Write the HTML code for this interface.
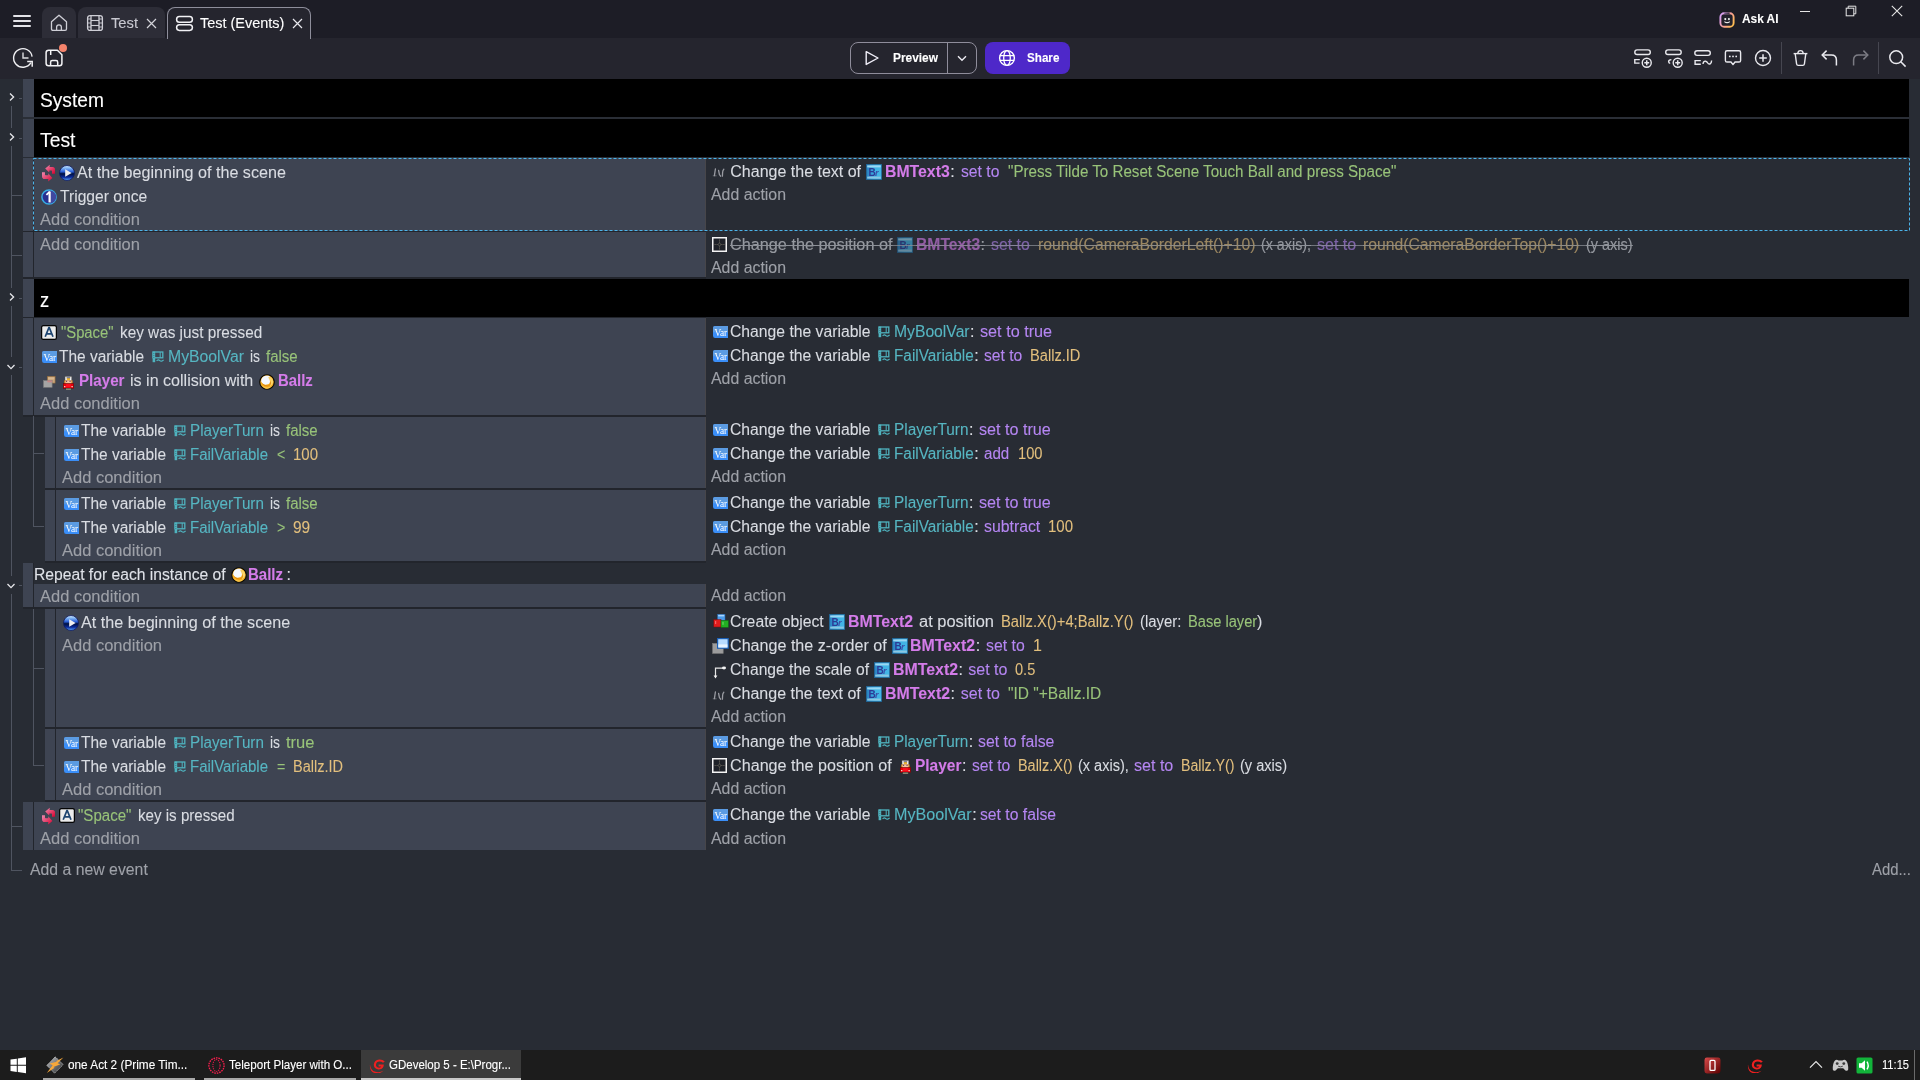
<!DOCTYPE html><html><head><meta charset="utf-8"><style>
*{margin:0;padding:0;box-sizing:border-box}
html,body{width:1920px;height:1080px;overflow:hidden;background:#282c34}
#r{position:relative;width:1920px;height:1080px;overflow:hidden;font-family:"Liberation Sans",sans-serif;will-change:transform}
#r>*{position:absolute}
#r>span{white-space:pre;font-size:16px;line-height:20px;transform-origin:0 0;-webkit-text-stroke:0.1px currentColor}
.t{color:#d9dce2}
.ad{color:#9ea1a8}
.ob{color:#d47ce9;font-weight:bold}
.op{color:#b586f2}
.st{color:#98c379}
.nu{color:#e2bf7d}
.va{color:#56b6c2}
.wh{color:#dfe2e8}
.gh{color:#ffffff;font-size:21px!important;line-height:20px!important}
.tab{font-size:14px!important;line-height:20px!important;color:#c9c9d1}
.tabA{font-size:14px!important;line-height:20px!important;color:#ffffff}
.btn{font-size:12px!important;line-height:20px!important;color:#ffffff;font-weight:bold}
.tb{font-size:12px!important;line-height:20px!important;color:#ffffff}
.strike{text-decoration:line-through}
.dim{opacity:.62}
</style></head><body><div id="r"><div style="left:0px;top:0px;width:1920px;height:38px;background:#1d1d26;"></div>
<div style="left:0px;top:38px;width:1920px;height:41px;background:#25252e;"></div>
<div style="left:13px;top:15px;width:18px;height:2px;background:#e3e3e8;border-radius:1px"></div>
<div style="left:13px;top:20px;width:18px;height:2px;background:#e3e3e8;border-radius:1px"></div>
<div style="left:13px;top:25px;width:18px;height:2px;background:#e3e3e8;border-radius:1px"></div>
<div style="left:42px;top:7px;width:34px;height:31px;background:#2d2d37;border-radius:8px 8px 0 0"></div>
<svg style="left:50px;top:14px;" width="18" height="18" viewBox="0 0 18 18"><path d="M1.5 7.8 L9 1.2 L16.5 7.8 V15 Q16.5 16.4 15.1 16.4 H2.9 Q1.5 16.4 1.5 15 Z" fill="none" stroke="#cfcfd6" stroke-width="1.3" stroke-linejoin="round"/><path d="M6.6 16.4 V13.2 Q6.6 10.8 9 10.8 Q11.4 10.8 11.4 13.2 V16.4" fill="none" stroke="#cfcfd6" stroke-width="1.3"/></svg>
<div style="left:78px;top:7px;width:87px;height:31px;background:#2d2d37;border-radius:8px 8px 0 0"></div>
<svg style="left:86px;top:14px;" width="18" height="18" viewBox="0 0 18 18"><rect x="1.6" y="1.6" width="14.8" height="14.8" rx="2.5" fill="none" stroke="#cfcfd6" stroke-width="1.3"/><line x1="5" y1="1.6" x2="5" y2="16.4" stroke="#cfcfd6" stroke-width="1.3"/><line x1="13" y1="1.6" x2="13" y2="16.4" stroke="#cfcfd6" stroke-width="1.3"/><line x1="5" y1="6.5" x2="13" y2="6.5" stroke="#cfcfd6" stroke-width="1.1"/><line x1="5" y1="11.5" x2="13" y2="11.5" stroke="#cfcfd6" stroke-width="1.1"/><path d="M1.6 5H5M1.6 9H5M1.6 13H5M13 5H16.4M13 9H16.4M13 13H16.4" stroke="#cfcfd6" stroke-width="0.9"/></svg>
<span class="tab" style="left:111.00px;top:13.00px;transform:scaleX(1.0511);">Test</span>
<svg style="left:146px;top:18px;" width="11" height="11" viewBox="0 0 11 11"><path d="M1 1L10 10M10 1L1 10" stroke="#d4d4da" stroke-width="1.2"/></svg>
<div style="left:167px;top:7px;width:144px;height:32px;background:#25252e;border:1px solid #8e8e9b;border-bottom:none;border-radius:8px 8px 0 0"></div>
<svg style="left:175px;top:15px;" width="19" height="17" viewBox="0 0 19 17"><rect x="1.6" y="1.6" width="15.8" height="5.6" rx="2.8" fill="none" stroke="#f2f2f5" stroke-width="1.5"/><rect x="1.6" y="9.8" width="15.8" height="5.6" rx="2.8" fill="none" stroke="#f2f2f5" stroke-width="1.5"/></svg>
<span class="tabA" style="left:200.40px;top:13.00px;transform:scaleX(1.0330);">Test (Events)</span>
<svg style="left:292px;top:18px;" width="11" height="11" viewBox="0 0 11 11"><path d="M1 1L10 10M10 1L1 10" stroke="#e8e8ee" stroke-width="1.2"/></svg>
<svg style="left:1717.5px;top:10.5px;" width="18" height="18" viewBox="0 0 18 18"><defs><linearGradient id="ai" x1="0" y1="0.2" x2="1" y2="0.8"><stop offset="0" stop-color="#d8a0f4"/><stop offset=".55" stop-color="#f8a090"/><stop offset="1" stop-color="#ffbe50"/></linearGradient><linearGradient id="ai2" gradientUnits="userSpaceOnUse" x1="5" y1="0" x2="12.5" y2="0"><stop offset="0" stop-color="#8a6aa0"/><stop offset="1" stop-color="#2a2434"/></linearGradient></defs><rect x="2.4" y="2.3" width="13.2" height="13.4" rx="3.8" fill="#1f1f29" stroke="url(#ai)" stroke-width="1.9"/><path d="M6.2 2.3 H11.6" stroke="url(#ai2)" stroke-width="1.9"/><rect x="5.4" y="5.6" width="7.2" height="7.2" rx="1.2" fill="#24242e"/><circle cx="7.3" cy="8.1" r="1.05" fill="#f0f0f0"/><circle cx="10.9" cy="8.1" r="1.05" fill="#f0f0f0"/><path d="M6.4 10.6 Q9.1 12.8 11.8 10.6" fill="none" stroke="#e8e8e8" stroke-width="1.2"/></svg>
<span class="btn" style="left:1742.00px;top:9.00px;transform:scaleX(0.9483);font-size:12.5px!important">Ask AI</span>
<div style="left:1800px;top:11px;width:10px;height:1px;background:#e6e6e6;"></div>
<svg style="left:1845px;top:5px;" width="12" height="12" viewBox="0 0 12 12"><rect x="1.2" y="3.2" width="7.6" height="7.6" fill="none" stroke="#e6e6e6" stroke-width="1"/><path d="M3.2 3.2V1.2H10.8V8.8H8.8" fill="none" stroke="#e6e6e6" stroke-width="1"/></svg>
<svg style="left:1891px;top:5px;" width="12" height="12" viewBox="0 0 12 12"><path d="M0.8 0.8L11.2 11.2M11.2 0.8L0.8 11.2" stroke="#e6e6e6" stroke-width="1.1"/></svg>
<svg style="left:10px;top:45px;" width="26" height="26" viewBox="0 0 26 26"><path d="M22.1 11.6 A9.3 9.3 0 1 0 20.9 17.7" fill="none" stroke="#f0f0f3" stroke-width="1.4"/><path d="M17.2 16.5 H22.2 V21.8" fill="none" stroke="#f0f0f3" stroke-width="1.5"/><path d="M13 7.5 V13 H18.5" fill="none" stroke="#dcdce0" stroke-width="1.4"/></svg>
<svg style="left:42.8px;top:42.2px;" width="26" height="26" viewBox="0 0 26 26"><path d="M5.7 8.2 H14.4 L18.9 12.7 V21.3 Q18.9 23.8 16.4 23.8 H5.6 Q3.1 23.8 3.1 21.3 V10.7 Q3.1 8.2 5.7 8.2 Z" fill="none" stroke="#f4f4f6" stroke-width="1.5" stroke-linejoin="round"/><path d="M7.7 8.2 V13" fill="none" stroke="#f4f4f6" stroke-width="1.5"/><path d="M7.6 23.8 V20.2 Q7.6 18.6 9.2 18.6 H13.1 Q14.7 18.6 14.7 20.2 V23.8" fill="none" stroke="#f4f4f6" stroke-width="1.5"/></svg>
<div style="left:59px;top:44px;width:8px;height:8px;border-radius:50%;background:#f4836b"></div>
<div style="left:850px;top:42px;width:127px;height:32px;border:1px solid #8f8d9b;border-radius:8px"></div>
<div style="left:947px;top:43px;width:1px;height:30px;background:#8f8d9b;"></div>
<svg style="left:864px;top:50px;" width="16" height="16" viewBox="0 0 16 16"><path d="M2.2 1.6 L14 8 L2.2 14.4 Z" fill="none" stroke="#f0eef8" stroke-width="1.4" stroke-linejoin="round"/></svg>
<span class="btn" style="left:892.50px;top:47.50px;transform:scaleX(0.9917);">Preview</span>
<svg style="left:957px;top:55px;" width="10" height="7" viewBox="0 0 10 7"><path d="M1 1.2 L5 5.2 L9 1.2" fill="none" stroke="#ecebf2" stroke-width="1.4"/></svg>
<div style="left:985px;top:42px;width:85px;height:32px;background:#4e28c9;border-radius:8px"></div>
<svg style="left:998px;top:49px;" width="18" height="18" viewBox="0 0 18 18"><circle cx="9" cy="9" r="7.4" fill="none" stroke="#fff" stroke-width="1.4"/><ellipse cx="9" cy="9" rx="3.3" ry="7.4" fill="none" stroke="#fff" stroke-width="1.3"/><path d="M1.8 6.6H16.2M1.8 11.4H16.2" stroke="#fff" stroke-width="1.3"/></svg>
<span class="btn" style="left:1027.00px;top:47.50px;transform:scaleX(0.9712);">Share</span>
<svg style="left:1632px;top:48px;" width="22" height="22" viewBox="0 0 22 22"><rect x="2.8" y="1.9" width="15.5" height="4.6" rx="2.3" fill="none" stroke="#e9e9ee" stroke-width="1.4"/><path d="M7.8 11.6 H2.8 V15.1 H7.6" fill="none" stroke="#e9e9ee" stroke-width="1.4"/><circle cx="14.75" cy="14.75" r="4.5" fill="#25252e" stroke="#e9e9ee" stroke-width="1.4"/><path d="M14.75 12.3V17.2M12.3 14.75H17.2" stroke="#e9e9ee" stroke-width="1.5"/></svg>
<svg style="left:1663px;top:48px;" width="22" height="22" viewBox="0 0 22 22"><rect x="2.7" y="1.9" width="15.5" height="4.6" rx="2.3" fill="none" stroke="#e9e9ee" stroke-width="1.4"/><path d="M8.4 11.6 Q5.6 11.8 5.6 13.6 Q5.6 15.2 7.2 15.4" fill="none" stroke="#e9e9ee" stroke-width="1.4"/><circle cx="14.7" cy="14.8" r="4.5" fill="#25252e" stroke="#e9e9ee" stroke-width="1.4"/><path d="M14.7 12.35V17.25M12.25 14.8H17.15" stroke="#e9e9ee" stroke-width="1.5"/></svg>
<svg style="left:1692px;top:48px;" width="22" height="22" viewBox="0 0 22 22"><rect x="2.8" y="2.8" width="15.5" height="4.6" rx="2.3" fill="none" stroke="#e9e9ee" stroke-width="1.4"/><path d="M8.8 12.6 H3.1 V16.2 H8.8" fill="none" stroke="#e9e9ee" stroke-width="1.4"/><path d="M11 16 Q11.4 12.8 13.6 13.2 Q15 13.5 15.6 14.8 Q16.4 16.4 18 16 Q19.6 15.4 19.6 12.6" fill="none" stroke="#e9e9ee" stroke-width="1.4"/></svg>
<svg style="left:1724px;top:49px;" width="18" height="18" viewBox="0 0 18 18"><path d="M3 1.8 H15 Q16.6 1.8 16.6 3.4 V11.4 Q16.6 13 15 13 H11 L9 15.6 L7 13 H3 Q1.4 13 1.4 11.4 V3.4 Q1.4 1.8 3 1.8 Z" fill="none" stroke="#e9e9ee" stroke-width="1.4" stroke-linejoin="round"/><circle cx="5.8" cy="7.4" r="0.9" fill="#e9e9ee"/><circle cx="9" cy="7.4" r="0.9" fill="#e9e9ee"/><circle cx="12.2" cy="7.4" r="0.9" fill="#e9e9ee"/></svg>
<svg style="left:1754px;top:49px;" width="18" height="18" viewBox="0 0 18 18"><circle cx="9" cy="9" r="7.5" fill="none" stroke="#e9e9ee" stroke-width="1.4"/><path d="M9 5.2V12.8M5.2 9H12.8" stroke="#e9e9ee" stroke-width="1.5"/></svg>
<div style="left:1781px;top:42px;width:1px;height:32px;background:#464650;"></div>
<svg style="left:1792px;top:49px;" width="17" height="18" viewBox="0 0 17 18"><path d="M1.6 4.6 H15.4" stroke="#e9e9ee" stroke-width="1.4"/><path d="M3.2 4.6 L4.6 15 Q4.8 16.4 6.2 16.4 H10.8 Q12.2 16.4 12.4 15 L13.8 4.6" fill="none" stroke="#e9e9ee" stroke-width="1.4"/><path d="M5.8 4.4 Q6 1.6 8.5 1.6 Q11 1.6 11.2 4.4" fill="none" stroke="#e9e9ee" stroke-width="1.4"/></svg>
<svg style="left:1820px;top:48px;" width="19" height="19" viewBox="0 0 19 19"><path d="M2.4 7 H11.4 Q16.4 7 16.4 12 V17.4" fill="none" stroke="#e9e9ee" stroke-width="1.5"/><path d="M6.6 2.6 L2.2 7 L6.6 11.4" fill="none" stroke="#e9e9ee" stroke-width="1.5"/></svg>
<svg style="left:1851px;top:48px;" width="19" height="19" viewBox="0 0 19 19"><path d="M16.6 7 H7.6 Q2.6 7 2.6 12 V17.4" fill="none" stroke="#7c7c84" stroke-width="1.5"/><path d="M12.4 2.6 L16.8 7 L12.4 11.4" fill="none" stroke="#7c7c84" stroke-width="1.5"/></svg>
<div style="left:1878px;top:42px;width:1px;height:32px;background:#464650;"></div>
<svg style="left:1887.6px;top:49px;" width="19" height="19" viewBox="0 0 19 19"><circle cx="8.2" cy="8.2" r="6.4" fill="none" stroke="#e9e9ee" stroke-width="1.5"/><path d="M12.8 12.8 L17.6 17.6" stroke="#e9e9ee" stroke-width="1.5"/></svg>
<div style="left:0px;top:79px;width:1920px;height:971px;background:#282c34;"></div>
<div style="left:23px;top:79px;width:11px;height:38px;background:#3e4452;"></div>
<div style="left:34px;top:79px;width:1875px;height:38px;background:#000000;"></div>
<span class="gh" style="left:40.30px;top:89.80px;transform:scaleX(0.9127);">System</span>
<div style="left:23px;top:117px;width:1886px;height:2px;background:#2a2e36;"></div>
<div style="left:23px;top:119px;width:11px;height:38px;background:#3e4452;"></div>
<div style="left:34px;top:119px;width:1875px;height:38px;background:#000000;"></div>
<span class="gh" style="left:40.30px;top:129.80px;transform:scaleX(0.9217);">Test</span>
<div style="left:23px;top:157px;width:1886px;height:1px;background:#282c34;"></div>
<div style="left:23px;top:158px;width:10px;height:73px;background:#3e4452;"></div>
<div style="left:33px;top:158px;width:1px;height:73px;background:#22252c;"></div>
<div style="left:34px;top:158px;width:671px;height:73px;background:#3e4452;"></div>
<div style="left:705px;top:158px;width:1px;height:73px;background:#47464a;"></div>
<div style="left:706px;top:158px;width:1203px;height:73px;background:#282c34;"></div>
<div style="left:23px;top:231px;width:683px;height:1px;background:#22252c;"></div>
<div style="left:23px;top:232px;width:10px;height:45px;background:#3e4452;"></div>
<div style="left:33px;top:232px;width:1px;height:45px;background:#22252c;"></div>
<div style="left:34px;top:232px;width:671px;height:45px;background:#3e4452;"></div>
<div style="left:705px;top:232px;width:1px;height:45px;background:#47464a;"></div>
<div style="left:706px;top:232px;width:1203px;height:45px;background:#282c34;"></div>
<div style="left:23px;top:277px;width:683px;height:2px;background:#22252c;"></div>
<div style="left:23px;top:279px;width:11px;height:38px;background:#3e4452;"></div>
<div style="left:34px;top:279px;width:1875px;height:38px;background:#000000;"></div>
<span class="gh" style="left:40.30px;top:290.00px;transform:scaleX(0.8762);">z</span>
<div style="left:23px;top:317px;width:683px;height:1px;background:#22252c;"></div>
<div style="left:23px;top:318px;width:10px;height:97px;background:#3e4452;"></div>
<div style="left:33px;top:318px;width:1px;height:97px;background:#22252c;"></div>
<div style="left:34px;top:318px;width:671px;height:97px;background:#3e4452;"></div>
<div style="left:705px;top:318px;width:1px;height:97px;background:#47464a;"></div>
<div style="left:706px;top:318px;width:1203px;height:97px;background:#282c34;"></div>
<div style="left:23px;top:415px;width:683px;height:2px;background:#22252c;"></div>
<div style="left:45px;top:417px;width:10px;height:71px;background:#3e4452;"></div>
<div style="left:55px;top:417px;width:1px;height:71px;background:#22252c;"></div>
<div style="left:56px;top:417px;width:649px;height:71px;background:#3e4452;"></div>
<div style="left:705px;top:417px;width:1px;height:71px;background:#47464a;"></div>
<div style="left:706px;top:417px;width:1203px;height:71px;background:#282c34;"></div>
<div style="left:45px;top:488px;width:661px;height:2px;background:#22252c;"></div>
<div style="left:45px;top:490px;width:10px;height:71px;background:#3e4452;"></div>
<div style="left:55px;top:490px;width:1px;height:71px;background:#22252c;"></div>
<div style="left:56px;top:490px;width:649px;height:71px;background:#3e4452;"></div>
<div style="left:705px;top:490px;width:1px;height:71px;background:#47464a;"></div>
<div style="left:706px;top:490px;width:1203px;height:71px;background:#282c34;"></div>
<div style="left:45px;top:561px;width:661px;height:2px;background:#22252c;"></div>
<div style="left:23px;top:563px;width:10px;height:44px;background:#3e4452;"></div>
<div style="left:33px;top:563px;width:1px;height:44px;background:#22252c;"></div>
<div style="left:34px;top:563px;width:1875px;height:21px;background:#282c34;"></div>
<div style="left:34px;top:584px;width:671px;height:23px;background:#3e4452;"></div>
<div style="left:705px;top:584px;width:1px;height:23px;background:#47464a;"></div>
<div style="left:706px;top:584px;width:1203px;height:23px;background:#282c34;"></div>
<div style="left:23px;top:607px;width:683px;height:2px;background:#22252c;"></div>
<div style="left:45px;top:609px;width:10px;height:118px;background:#3e4452;"></div>
<div style="left:55px;top:609px;width:1px;height:118px;background:#22252c;"></div>
<div style="left:56px;top:609px;width:649px;height:118px;background:#3e4452;"></div>
<div style="left:705px;top:609px;width:1px;height:118px;background:#47464a;"></div>
<div style="left:706px;top:609px;width:1203px;height:118px;background:#282c34;"></div>
<div style="left:45px;top:727px;width:661px;height:2px;background:#22252c;"></div>
<div style="left:45px;top:729px;width:10px;height:71px;background:#3e4452;"></div>
<div style="left:55px;top:729px;width:1px;height:71px;background:#22252c;"></div>
<div style="left:56px;top:729px;width:649px;height:71px;background:#3e4452;"></div>
<div style="left:705px;top:729px;width:1px;height:71px;background:#47464a;"></div>
<div style="left:706px;top:729px;width:1203px;height:71px;background:#282c34;"></div>
<div style="left:45px;top:800px;width:661px;height:2px;background:#22252c;"></div>
<div style="left:23px;top:802px;width:10px;height:48px;background:#3e4452;"></div>
<div style="left:33px;top:802px;width:1px;height:48px;background:#22252c;"></div>
<div style="left:34px;top:802px;width:671px;height:48px;background:#3e4452;"></div>
<div style="left:705px;top:802px;width:1px;height:48px;background:#47464a;"></div>
<div style="left:706px;top:802px;width:1203px;height:48px;background:#282c34;"></div>
<div style="left:11px;top:106px;width:1px;height:22px;background:#4f5460;"></div>
<div style="left:11px;top:146px;width:1px;height:142px;background:#4f5460;"></div>
<div style="left:11px;top:306px;width:1px;height:51px;background:#4f5460;"></div>
<div style="left:11px;top:375px;width:1px;height:201px;background:#4f5460;"></div>
<div style="left:11px;top:594px;width:1px;height:277px;background:#4f5460;"></div>
<div style="left:11px;top:870px;width:11px;height:1px;background:#4f5460;"></div>
<div style="left:11px;top:195px;width:11px;height:1px;background:#4f5460;"></div>
<div style="left:11px;top:255px;width:11px;height:1px;background:#4f5460;"></div>
<div style="left:11px;top:826px;width:11px;height:1px;background:#4f5460;"></div>
<div style="left:19px;top:98px;width:3px;height:1px;background:#4f5460;"></div>
<div style="left:19px;top:138px;width:3px;height:1px;background:#4f5460;"></div>
<div style="left:19px;top:298px;width:3px;height:1px;background:#4f5460;"></div>
<div style="left:19px;top:367px;width:3px;height:1px;background:#4f5460;"></div>
<div style="left:19px;top:585px;width:3px;height:1px;background:#4f5460;"></div>
<div style="left:33px;top:416px;width:1px;height:111px;background:#4f5460;"></div>
<div style="left:33px;top:453px;width:11px;height:1px;background:#4f5460;"></div>
<div style="left:33px;top:526px;width:11px;height:1px;background:#4f5460;"></div>
<div style="left:33px;top:609px;width:1px;height:157px;background:#4f5460;"></div>
<div style="left:33px;top:668px;width:11px;height:1px;background:#4f5460;"></div>
<div style="left:33px;top:765px;width:11px;height:1px;background:#4f5460;"></div>
<svg style="left:8px;top:92px;" width="8" height="10" viewBox="0 0 8 10"><path d="M2 1.5 L5.6 5 L2 8.5" fill="none" stroke="#e8e8ec" stroke-width="1.3"/></svg>
<svg style="left:8px;top:132px;" width="8" height="10" viewBox="0 0 8 10"><path d="M2 1.5 L5.6 5 L2 8.5" fill="none" stroke="#e8e8ec" stroke-width="1.3"/></svg>
<svg style="left:8px;top:292px;" width="8" height="10" viewBox="0 0 8 10"><path d="M2 1.5 L5.6 5 L2 8.5" fill="none" stroke="#e8e8ec" stroke-width="1.3"/></svg>
<svg style="left:6px;top:362.5px;" width="10" height="8" viewBox="0 0 10 8"><path d="M1.5 2 L5 5.6 L8.5 2" fill="none" stroke="#e8e8ec" stroke-width="1.3"/></svg>
<svg style="left:6px;top:581.5px;" width="10" height="8" viewBox="0 0 10 8"><path d="M1.5 2 L5 5.6 L8.5 2" fill="none" stroke="#e8e8ec" stroke-width="1.3"/></svg>
<svg style="left:33px;top:158px;" width="1877" height="73" viewBox="0 0 1877 73"><rect x="0.5" y="0.5" width="1876" height="72" fill="none" stroke="#4cb4ea" stroke-width="1" stroke-dasharray="3 2"/></svg>
<svg style="left:40px;top:163px;" width="18" height="20" viewBox="0 0 18 20"><defs><linearGradient id="g1" x1="0" y1="0" x2="1" y2="1"><stop offset="0" stop-color="#f08ab0"/><stop offset="1" stop-color="#d8002e"/></linearGradient></defs><path d="M5.2 5.6 L9.8 1.8 L9.6 4 L12.6 4 Q15 4 15 6.6 L15 10.8 L12 10.8 L12 8 Q12 7.4 11.4 7.4 L9.4 7.4 L9.2 9.4 Z" fill="url(#g1)"/><path d="M2 9.2 L5 9.2 L5 11.6 Q5 12.2 5.6 12.2 L8.4 12.2 L8.2 10.2 L12.4 15 L8.2 18.6 L8.4 16 L4.8 16 Q2 16 2 13.2 Z" fill="url(#g1)"/></svg>
<svg style="left:59px;top:165px;" width="16" height="16" viewBox="0 0 16 16"><defs><linearGradient id="g2" x1="0" y1="0" x2="0" y2="1"><stop offset="0" stop-color="#d8f0ff"/><stop offset=".18" stop-color="#7fb4f4"/><stop offset=".42" stop-color="#2a5ed8"/><stop offset=".55" stop-color="#00103e"/><stop offset=".78" stop-color="#0a2a9a"/><stop offset="1" stop-color="#5aa8ff"/></linearGradient></defs><circle cx="8" cy="8" r="7.5" fill="url(#g2)" stroke="#101a60" stroke-width=".8"/><path d="M6.2 4.2 L12.6 8 L6.2 11.8 Z" fill="#f0f0f0"/></svg>
<span class="t" style="left:77.10px;top:163.00px;transform:scaleX(1.0079);">At the beginning of the scene</span>
<svg style="left:41px;top:189px;" width="16" height="16" viewBox="0 0 16 16"><circle cx="8" cy="8" r="7.1" fill="#283090" stroke="#38ace4" stroke-width="1.5"/><path d="M8.8 1.6 A6.4 6.4 0 0 1 8.8 14.4 Z" fill="#4048a0"/><path d="M8.6 2.6 V13.4" stroke="#ffffff" stroke-width="2.2"/><path d="M5.4 5.8 L8.8 2.6" stroke="#ffffff" stroke-width="1.8"/></svg>
<span class="t" style="left:59.50px;top:187.00px;transform:scaleX(0.9772);">Trigger once</span>
<span class="ad" style="left:40.10px;top:210.00px;transform:scaleX(1.0302);">Add condition</span>
<span class="ad" style="left:40.10px;top:235.00px;transform:scaleX(1.0302);">Add condition</span>
<svg style="left:41px;top:325px;" width="16" height="15" viewBox="0 0 16 15"><rect x="0.7" y="0.7" width="14.6" height="13.6" rx="1.6" fill="#f2f2f2" stroke="#050505" stroke-width="1.4"/><rect x="1.6" y="1.6" width="12.8" height="11.8" fill="#ececec"/><path d="M4.2 11.8 L7.9 2.6 H8.3 L12 11.8 M5.6 8.9 H10.6" fill="none" stroke="#1d4470" stroke-width="1.7"/></svg>
<span class="st" style="left:60.80px;top:323.00px;transform:scaleX(0.9254);">"Space"</span>
<span class="t" style="left:120.30px;top:323.00px;transform:scaleX(0.9575);">key was just pressed</span>
<svg style="left:42px;top:351px;" width="15" height="12" viewBox="0 0 15 12"><path d="M2.2 0 H15 V12 H2.2 Q0 12 0 9.8 V2.2 Q0 0 2.2 0 Z" fill="#3a8ef8"/><path d="M2.2 0 H15 V6.2 H0 V2.2 Q0 0 2.2 0 Z" fill="#5b9be2"/><text x="7.7" y="9.6" text-anchor="middle" font-family="Liberation Serif" font-size="9.4" fill="#ffffff" letter-spacing="-0.2">Var</text></svg>
<span class="t" style="left:59.20px;top:347.00px;transform:scaleX(0.9654);">The variable</span>
<svg style="left:151.5px;top:351px;" width="13" height="12" viewBox="0 0 13 12"><rect x="1" y="1" width="9.8" height="5.8" fill="none" stroke="#4fb3bf" stroke-width="1.3"/><rect x="0.6" y="0.6" width="2.6" height="10.6" fill="#4fb3bf"/><circle cx="1.9" cy="2.4" r=".45" fill="#2a3140"/><circle cx="1.9" cy="4.4" r=".45" fill="#2a3140"/><circle cx="1.9" cy="6.4" r=".45" fill="#2a3140"/><path d="M8.2 1 V6.8" stroke="#4fb3bf" stroke-width="1"/><path d="M4.6 10 Q6.2 8 7.8 9.6 Q9.4 11.2 11.6 8.8" fill="none" stroke="#4fb3bf" stroke-width="1.2"/></svg>
<span class="va" style="left:168.30px;top:347.00px;transform:scaleX(0.9849);">MyBoolVar</span>
<span class="t" style="left:250.00px;top:347.00px;transform:scaleX(0.8649);">is</span>
<span class="st" style="left:265.80px;top:347.00px;transform:scaleX(0.9380);">false</span>
<svg style="left:42.8px;top:375.8px;" width="14" height="13" viewBox="0 0 14 13"><rect x="4.3" y="0.3" width="7.8" height="6.8" fill="#c9a47a" stroke="#8a6438" stroke-width=".6"/><rect x="5.2" y="1.4" width="6" height="2" fill="#d8b890"/><rect x="0.5" y="4.5" width="8.6" height="6.8" fill="#a4a4a4" stroke="#7a7a7a" stroke-width=".6"/><rect x="4.3" y="4.5" width="4.8" height="1.8" fill="#c78686"/></svg>
<svg style="left:62.6px;top:376px;" width="11" height="14" viewBox="0 0 11 14"><rect x="2" y="0.4" width="6.8" height="4" fill="#f0f0f0" stroke="#555" stroke-width=".5"/><rect x="3.8" y="2.2" width="3.2" height="1.6" fill="#f0a800"/><rect x="3.6" y="1.4" width="3.6" height=".8" fill="#3a4060"/><rect x="1.2" y="4.4" width="8.4" height="3.2" fill="#d98a2a"/><rect x="2.4" y="4.4" width="6" height="3.4" fill="#f3c2a2"/><rect x="3.2" y="4.8" width=".9" height="1.1" fill="#402040"/><rect x="6.6" y="4.8" width=".9" height="1.1" fill="#402040"/><rect x="0.3" y="7.6" width="10.2" height="4.8" fill="#e8000c" stroke="#7a0000" stroke-width=".6"/><rect x="3" y="8.2" width="4.8" height="3" fill="#ff1020"/><rect x="1" y="10" width="1.4" height="1.2" fill="#f0d0c0"/><rect x="8.4" y="10" width="1.4" height="1.2" fill="#f0d0c0"/><rect x="2.6" y="12.2" width="5.6" height="1.8" fill="#a8a488" stroke="#2a2a2a" stroke-width=".5"/></svg>
<span class="ob" style="left:78.70px;top:371.00px;transform:scaleX(0.9470);">Player</span>
<span class="t" style="left:130.00px;top:371.00px;transform:scaleX(1.0047);">is in collision with</span>
<svg style="left:259px;top:374px;" width="16" height="16" viewBox="0 0 16 16"><circle cx="8" cy="8" r="7.3" fill="#f4ae22" stroke="#050505" stroke-width="1.1"/><path d="M3 11.5 Q8 15.5 13 11.5 Q11 14.6 8 14.8 Q4.6 14.6 3 11.5Z" fill="#f8c850"/><path d="M2.2 7.6 Q2 2.8 6.6 1.8 L9.6 1.8 Q11.2 2.6 11.2 3.4 Q9.6 3.2 9.4 3.8 Q11 5 11 7.6 Q10.8 10.6 7.6 10.6 Q5 10.8 3.6 9.4 Z" fill="#f4f8ff"/><path d="M9.2 3.4 L11.4 3 Q14 4.4 14.2 7.6 Q14 11.4 10.4 12.2 Q12 10 11.6 7.2 Q11.2 4.8 9.2 3.4Z" fill="#fbd56a"/><path d="M3.4 9.4 Q6 11.6 9.4 11.4 Q11.6 10.6 11.4 7.6 L12 8.2 Q12 12 8.4 12.4 Q4.6 12.4 2.6 9.6 Z" fill="#e08a10"/></svg>
<span class="ob" style="left:278.30px;top:371.00px;transform:scaleX(0.9292);">Ballz</span>
<span class="ad" style="left:40.30px;top:394.00px;transform:scaleX(1.0302);">Add condition</span>
<svg style="left:64px;top:425px;" width="15" height="12" viewBox="0 0 15 12"><path d="M2.2 0 H15 V12 H2.2 Q0 12 0 9.8 V2.2 Q0 0 2.2 0 Z" fill="#3a8ef8"/><path d="M2.2 0 H15 V6.2 H0 V2.2 Q0 0 2.2 0 Z" fill="#5b9be2"/><text x="7.7" y="9.6" text-anchor="middle" font-family="Liberation Serif" font-size="9.4" fill="#ffffff" letter-spacing="-0.2">Var</text></svg>
<span class="t" style="left:81.20px;top:421.00px;transform:scaleX(0.9654);">The variable</span>
<svg style="left:173.5px;top:425px;" width="13" height="12" viewBox="0 0 13 12"><rect x="1" y="1" width="9.8" height="5.8" fill="none" stroke="#4fb3bf" stroke-width="1.3"/><rect x="0.6" y="0.6" width="2.6" height="10.6" fill="#4fb3bf"/><circle cx="1.9" cy="2.4" r=".45" fill="#2a3140"/><circle cx="1.9" cy="4.4" r=".45" fill="#2a3140"/><circle cx="1.9" cy="6.4" r=".45" fill="#2a3140"/><path d="M8.2 1 V6.8" stroke="#4fb3bf" stroke-width="1"/><path d="M4.6 10 Q6.2 8 7.8 9.6 Q9.4 11.2 11.6 8.8" fill="none" stroke="#4fb3bf" stroke-width="1.2"/></svg>
<span class="va" style="left:190.30px;top:421.00px;transform:scaleX(0.9516);">PlayerTurn</span>
<span class="t" style="left:270.00px;top:421.00px;transform:scaleX(0.8649);">is</span>
<span class="st" style="left:285.80px;top:421.00px;transform:scaleX(0.9380);">false</span>
<svg style="left:64px;top:449px;" width="15" height="12" viewBox="0 0 15 12"><path d="M2.2 0 H15 V12 H2.2 Q0 12 0 9.8 V2.2 Q0 0 2.2 0 Z" fill="#3a8ef8"/><path d="M2.2 0 H15 V6.2 H0 V2.2 Q0 0 2.2 0 Z" fill="#5b9be2"/><text x="7.7" y="9.6" text-anchor="middle" font-family="Liberation Serif" font-size="9.4" fill="#ffffff" letter-spacing="-0.2">Var</text></svg>
<span class="t" style="left:81.20px;top:445.00px;transform:scaleX(0.9654);">The variable</span>
<svg style="left:173.5px;top:449px;" width="13" height="12" viewBox="0 0 13 12"><rect x="1" y="1" width="9.8" height="5.8" fill="none" stroke="#4fb3bf" stroke-width="1.3"/><rect x="0.6" y="0.6" width="2.6" height="10.6" fill="#4fb3bf"/><circle cx="1.9" cy="2.4" r=".45" fill="#2a3140"/><circle cx="1.9" cy="4.4" r=".45" fill="#2a3140"/><circle cx="1.9" cy="6.4" r=".45" fill="#2a3140"/><path d="M8.2 1 V6.8" stroke="#4fb3bf" stroke-width="1"/><path d="M4.6 10 Q6.2 8 7.8 9.6 Q9.4 11.2 11.6 8.8" fill="none" stroke="#4fb3bf" stroke-width="1.2"/></svg>
<span class="va" style="left:190.30px;top:445.00px;transform:scaleX(0.9364);">FailVariable</span>
<span class="st" style="left:276.70px;top:445.00px;transform:scaleX(0.8883);">&lt;</span>
<span class="nu" style="left:293.30px;top:445.00px;transform:scaleX(0.9362);">100</span>
<span class="ad" style="left:62.00px;top:468.00px;transform:scaleX(1.0313);">Add condition</span>
<svg style="left:64px;top:498px;" width="15" height="12" viewBox="0 0 15 12"><path d="M2.2 0 H15 V12 H2.2 Q0 12 0 9.8 V2.2 Q0 0 2.2 0 Z" fill="#3a8ef8"/><path d="M2.2 0 H15 V6.2 H0 V2.2 Q0 0 2.2 0 Z" fill="#5b9be2"/><text x="7.7" y="9.6" text-anchor="middle" font-family="Liberation Serif" font-size="9.4" fill="#ffffff" letter-spacing="-0.2">Var</text></svg>
<span class="t" style="left:81.20px;top:494.00px;transform:scaleX(0.9654);">The variable</span>
<svg style="left:173.5px;top:498px;" width="13" height="12" viewBox="0 0 13 12"><rect x="1" y="1" width="9.8" height="5.8" fill="none" stroke="#4fb3bf" stroke-width="1.3"/><rect x="0.6" y="0.6" width="2.6" height="10.6" fill="#4fb3bf"/><circle cx="1.9" cy="2.4" r=".45" fill="#2a3140"/><circle cx="1.9" cy="4.4" r=".45" fill="#2a3140"/><circle cx="1.9" cy="6.4" r=".45" fill="#2a3140"/><path d="M8.2 1 V6.8" stroke="#4fb3bf" stroke-width="1"/><path d="M4.6 10 Q6.2 8 7.8 9.6 Q9.4 11.2 11.6 8.8" fill="none" stroke="#4fb3bf" stroke-width="1.2"/></svg>
<span class="va" style="left:190.30px;top:494.00px;transform:scaleX(0.9516);">PlayerTurn</span>
<span class="t" style="left:270.00px;top:494.00px;transform:scaleX(0.8649);">is</span>
<span class="st" style="left:285.80px;top:494.00px;transform:scaleX(0.9380);">false</span>
<svg style="left:64px;top:522px;" width="15" height="12" viewBox="0 0 15 12"><path d="M2.2 0 H15 V12 H2.2 Q0 12 0 9.8 V2.2 Q0 0 2.2 0 Z" fill="#3a8ef8"/><path d="M2.2 0 H15 V6.2 H0 V2.2 Q0 0 2.2 0 Z" fill="#5b9be2"/><text x="7.7" y="9.6" text-anchor="middle" font-family="Liberation Serif" font-size="9.4" fill="#ffffff" letter-spacing="-0.2">Var</text></svg>
<span class="t" style="left:81.20px;top:518.00px;transform:scaleX(0.9654);">The variable</span>
<svg style="left:173.5px;top:522px;" width="13" height="12" viewBox="0 0 13 12"><rect x="1" y="1" width="9.8" height="5.8" fill="none" stroke="#4fb3bf" stroke-width="1.3"/><rect x="0.6" y="0.6" width="2.6" height="10.6" fill="#4fb3bf"/><circle cx="1.9" cy="2.4" r=".45" fill="#2a3140"/><circle cx="1.9" cy="4.4" r=".45" fill="#2a3140"/><circle cx="1.9" cy="6.4" r=".45" fill="#2a3140"/><path d="M8.2 1 V6.8" stroke="#4fb3bf" stroke-width="1"/><path d="M4.6 10 Q6.2 8 7.8 9.6 Q9.4 11.2 11.6 8.8" fill="none" stroke="#4fb3bf" stroke-width="1.2"/></svg>
<span class="va" style="left:190.30px;top:518.00px;transform:scaleX(0.9364);">FailVariable</span>
<span class="st" style="left:276.70px;top:518.00px;transform:scaleX(0.8883);">&gt;</span>
<span class="nu" style="left:292.50px;top:518.00px;transform:scaleX(0.9665);">99</span>
<span class="ad" style="left:62.00px;top:541.00px;transform:scaleX(1.0313);">Add condition</span>
<span class="wh" style="left:34.20px;top:565.00px;transform:scaleX(0.9791);">Repeat for each instance of</span>
<svg style="left:230.5px;top:566.8px;" width="16" height="16" viewBox="0 0 16 16"><circle cx="8" cy="8" r="7.3" fill="#f4ae22" stroke="#050505" stroke-width="1.1"/><path d="M3 11.5 Q8 15.5 13 11.5 Q11 14.6 8 14.8 Q4.6 14.6 3 11.5Z" fill="#f8c850"/><path d="M2.2 7.6 Q2 2.8 6.6 1.8 L9.6 1.8 Q11.2 2.6 11.2 3.4 Q9.6 3.2 9.4 3.8 Q11 5 11 7.6 Q10.8 10.6 7.6 10.6 Q5 10.8 3.6 9.4 Z" fill="#f4f8ff"/><path d="M9.2 3.4 L11.4 3 Q14 4.4 14.2 7.6 Q14 11.4 10.4 12.2 Q12 10 11.6 7.2 Q11.2 4.8 9.2 3.4Z" fill="#fbd56a"/><path d="M3.4 9.4 Q6 11.6 9.4 11.4 Q11.6 10.6 11.4 7.6 L12 8.2 Q12 12 8.4 12.4 Q4.6 12.4 2.6 9.6 Z" fill="#e08a10"/></svg>
<span class="ob" style="left:248.30px;top:565.00px;transform:scaleX(0.9372);">Ballz</span>
<span class="wh" style="left:286.50px;top:565.00px;">:</span>
<span class="ad" style="left:40.00px;top:587.00px;transform:scaleX(1.0313);">Add condition</span>
<svg style="left:63px;top:615px;" width="16" height="16" viewBox="0 0 16 16"><defs><linearGradient id="g3" x1="0" y1="0" x2="0" y2="1"><stop offset="0" stop-color="#d8f0ff"/><stop offset=".18" stop-color="#7fb4f4"/><stop offset=".42" stop-color="#2a5ed8"/><stop offset=".55" stop-color="#00103e"/><stop offset=".78" stop-color="#0a2a9a"/><stop offset="1" stop-color="#5aa8ff"/></linearGradient></defs><circle cx="8" cy="8" r="7.5" fill="url(#g3)" stroke="#101a60" stroke-width=".8"/><path d="M6.2 4.2 L12.6 8 L6.2 11.8 Z" fill="#f0f0f0"/></svg>
<span class="t" style="left:80.80px;top:613.00px;transform:scaleX(1.0093);">At the beginning of the scene</span>
<span class="ad" style="left:62.00px;top:636.00px;transform:scaleX(1.0313);">Add condition</span>
<svg style="left:64px;top:737px;" width="15" height="12" viewBox="0 0 15 12"><path d="M2.2 0 H15 V12 H2.2 Q0 12 0 9.8 V2.2 Q0 0 2.2 0 Z" fill="#3a8ef8"/><path d="M2.2 0 H15 V6.2 H0 V2.2 Q0 0 2.2 0 Z" fill="#5b9be2"/><text x="7.7" y="9.6" text-anchor="middle" font-family="Liberation Serif" font-size="9.4" fill="#ffffff" letter-spacing="-0.2">Var</text></svg>
<span class="t" style="left:81.20px;top:733.00px;transform:scaleX(0.9654);">The variable</span>
<svg style="left:173.5px;top:737px;" width="13" height="12" viewBox="0 0 13 12"><rect x="1" y="1" width="9.8" height="5.8" fill="none" stroke="#4fb3bf" stroke-width="1.3"/><rect x="0.6" y="0.6" width="2.6" height="10.6" fill="#4fb3bf"/><circle cx="1.9" cy="2.4" r=".45" fill="#2a3140"/><circle cx="1.9" cy="4.4" r=".45" fill="#2a3140"/><circle cx="1.9" cy="6.4" r=".45" fill="#2a3140"/><path d="M8.2 1 V6.8" stroke="#4fb3bf" stroke-width="1"/><path d="M4.6 10 Q6.2 8 7.8 9.6 Q9.4 11.2 11.6 8.8" fill="none" stroke="#4fb3bf" stroke-width="1.2"/></svg>
<span class="va" style="left:190.30px;top:733.00px;transform:scaleX(0.9516);">PlayerTurn</span>
<span class="t" style="left:270.00px;top:733.00px;transform:scaleX(0.8649);">is</span>
<span class="st" style="left:285.80px;top:733.00px;transform:scaleX(1.0298);">true</span>
<svg style="left:64px;top:761px;" width="15" height="12" viewBox="0 0 15 12"><path d="M2.2 0 H15 V12 H2.2 Q0 12 0 9.8 V2.2 Q0 0 2.2 0 Z" fill="#3a8ef8"/><path d="M2.2 0 H15 V6.2 H0 V2.2 Q0 0 2.2 0 Z" fill="#5b9be2"/><text x="7.7" y="9.6" text-anchor="middle" font-family="Liberation Serif" font-size="9.4" fill="#ffffff" letter-spacing="-0.2">Var</text></svg>
<span class="t" style="left:81.20px;top:757.00px;transform:scaleX(0.9654);">The variable</span>
<svg style="left:173.5px;top:761px;" width="13" height="12" viewBox="0 0 13 12"><rect x="1" y="1" width="9.8" height="5.8" fill="none" stroke="#4fb3bf" stroke-width="1.3"/><rect x="0.6" y="0.6" width="2.6" height="10.6" fill="#4fb3bf"/><circle cx="1.9" cy="2.4" r=".45" fill="#2a3140"/><circle cx="1.9" cy="4.4" r=".45" fill="#2a3140"/><circle cx="1.9" cy="6.4" r=".45" fill="#2a3140"/><path d="M8.2 1 V6.8" stroke="#4fb3bf" stroke-width="1"/><path d="M4.6 10 Q6.2 8 7.8 9.6 Q9.4 11.2 11.6 8.8" fill="none" stroke="#4fb3bf" stroke-width="1.2"/></svg>
<span class="va" style="left:190.30px;top:757.00px;transform:scaleX(0.9364);">FailVariable</span>
<span class="st" style="left:276.70px;top:757.00px;transform:scaleX(0.8883);">=</span>
<span class="nu" style="left:293.30px;top:757.00px;transform:scaleX(0.9070);">Ballz.ID</span>
<span class="ad" style="left:62.00px;top:780.00px;transform:scaleX(1.0313);">Add condition</span>
<svg style="left:40px;top:806px;" width="18" height="20" viewBox="0 0 18 20"><defs><linearGradient id="g4" x1="0" y1="0" x2="1" y2="1"><stop offset="0" stop-color="#f08ab0"/><stop offset="1" stop-color="#d8002e"/></linearGradient></defs><path d="M5.2 5.6 L9.8 1.8 L9.6 4 L12.6 4 Q15 4 15 6.6 L15 10.8 L12 10.8 L12 8 Q12 7.4 11.4 7.4 L9.4 7.4 L9.2 9.4 Z" fill="url(#g4)"/><path d="M2 9.2 L5 9.2 L5 11.6 Q5 12.2 5.6 12.2 L8.4 12.2 L8.2 10.2 L12.4 15 L8.2 18.6 L8.4 16 L4.8 16 Q2 16 2 13.2 Z" fill="url(#g4)"/></svg>
<svg style="left:59px;top:808px;" width="16" height="15" viewBox="0 0 16 15"><rect x="0.7" y="0.7" width="14.6" height="13.6" rx="1.6" fill="#f2f2f2" stroke="#050505" stroke-width="1.4"/><rect x="1.6" y="1.6" width="12.8" height="11.8" fill="#ececec"/><path d="M4.2 11.8 L7.9 2.6 H8.3 L12 11.8 M5.6 8.9 H10.6" fill="none" stroke="#1d4470" stroke-width="1.7"/></svg>
<span class="st" style="left:78.30px;top:806.00px;transform:scaleX(0.9412);">"Space"</span>
<span class="t" style="left:138.30px;top:806.00px;transform:scaleX(0.9456);">key is pressed</span>
<span class="ad" style="left:40.00px;top:829.00px;transform:scaleX(1.0313);">Add condition</span>
<span class="ad" style="left:30.30px;top:859.50px;transform:scaleX(0.9882);">Add a new event</span>
<span class="ad" style="left:1872.40px;top:859.50px;transform:scaleX(0.9303);">Add...</span>
<svg style="left:712px;top:168px;" width="14" height="10" viewBox="0 0 14 10"><path d="M3.4 1 L2.4 7.6" stroke="#9a9ca3" stroke-width="1.3" stroke-linecap="round"/><path d="M0.8 7.8 L4.6 7.8" stroke="#9a9ca3" stroke-width=".9" opacity=".6"/><path d="M6.6 2.4 L7.4 6.6 L8.6 8.2" stroke="#9a9ca3" stroke-width="1.3" stroke-linecap="round" fill="none"/><path d="M11.8 1.2 Q10.6 2.4 10.6 4.6 L10.4 8.2" stroke="#9a9ca3" stroke-width="1.3" stroke-linecap="round" fill="none"/></svg>
<span class="t" style="left:730.30px;top:162.00px;">Change the text of</span>
<svg style="left:866px;top:164px;" width="16" height="16" viewBox="0 0 16 16"><defs><linearGradient id="g5" x1="0" y1="0" x2="1" y2="0"><stop offset="0" stop-color="#2a80c0"/><stop offset=".5" stop-color="#3db2e4"/><stop offset="1" stop-color="#45b6e6"/></linearGradient></defs><rect x="0" y="0" width="16" height="16" fill="#1f5f8c"/><rect x="0.8" y="0.8" width="14.4" height="14.4" fill="url(#g5)"/><rect x="1.2" y="1.4" width="13.6" height="2" fill="#9ad6f2"/><rect x="1.2" y="12.6" width="13.6" height="2" fill="#8cc6e2"/><text x="2.4" y="11.6" font-family="Liberation Sans" font-weight="bold" font-size="10" fill="#2c3a96">B</text><text x="9" y="11.6" font-family="Liberation Sans" font-weight="bold" font-style="italic" font-size="9" fill="#3a50aa">r</text></svg>
<span class="ob" style="left:885.00px;top:162.00px;transform:scaleX(0.9878);">BMText3</span>
<span class="wh" style="left:950.20px;top:162.00px;">:</span>
<span class="op" style="left:961.00px;top:162.00px;transform:scaleX(0.9811);">set to</span>
<span class="st" style="left:1007.70px;top:162.00px;transform:scaleX(0.9468);">"Press Tilde To Reset Scene Touch Ball and press Space"</span>
<span class="ad" style="left:711.00px;top:185.00px;transform:scaleX(0.9919);">Add action</span>
<svg style="left:712px;top:237px;" width="15" height="15" viewBox="0 0 15 15"><rect x="0.75" y="0.75" width="13.5" height="13.5" fill="#1e2128" stroke="#f4f4f4" stroke-width="1.5"/><g fill="#6f6b60"><rect x="7" y="2.6" width="1" height="1"/><rect x="7" y="4.6" width="1" height="1"/><rect x="7" y="9.4" width="1" height="1"/><rect x="7" y="11.4" width="1" height="1"/><rect x="2.6" y="7" width="1" height="1"/><rect x="4.6" y="7" width="1" height="1"/><rect x="9.4" y="7" width="1" height="1"/><rect x="11.4" y="7" width="1" height="1"/></g><circle cx="7.5" cy="7.5" r="1.2" fill="none" stroke="#6f6b60" stroke-width=".6"/></svg>
<span class="t strike dim" style="left:730.00px;top:235.00px;transform:scaleX(1.0148);">Change the position of</span>
<span class="ob strike dim" style="left:915.75px;top:235.00px;transform:scaleX(0.9809);">BMText3</span>
<span class="op strike dim" style="left:991.25px;top:235.00px;transform:scaleX(0.9900);">set to</span>
<span class="nu strike dim" style="left:1037.50px;top:235.00px;transform:scaleX(0.9842);">round(CameraBorderLeft()+10)</span>
<span class="t strike dim" style="left:1261.00px;top:235.00px;transform:scaleX(0.8929);">(x axis),</span>
<span class="op strike dim" style="left:1317.00px;top:235.00px;">set to</span>
<span class="nu strike dim" style="left:1362.50px;top:235.00px;transform:scaleX(0.9825);">round(CameraBorderTop()+10)</span>
<span class="t strike dim" style="left:1586.00px;top:235.00px;transform:scaleX(0.9018);">(y axis)</span>
<svg style="left:897px;top:237px;opacity:.6" width="16" height="16" viewBox="0 0 16 16"><defs><linearGradient id="g6" x1="0" y1="0" x2="1" y2="0"><stop offset="0" stop-color="#2a80c0"/><stop offset=".5" stop-color="#3db2e4"/><stop offset="1" stop-color="#45b6e6"/></linearGradient></defs><rect x="0" y="0" width="16" height="16" fill="#1f5f8c"/><rect x="0.8" y="0.8" width="14.4" height="14.4" fill="url(#g6)"/><rect x="1.2" y="1.4" width="13.6" height="2" fill="#9ad6f2"/><rect x="1.2" y="12.6" width="13.6" height="2" fill="#8cc6e2"/><text x="2.4" y="11.6" font-family="Liberation Sans" font-weight="bold" font-size="10" fill="#2c3a96">B</text><text x="9" y="11.6" font-family="Liberation Sans" font-weight="bold" font-style="italic" font-size="9" fill="#3a50aa">r</text></svg>
<span class="wh strike dim" style="left:980.50px;top:235.00px;">:</span>
<div style="left:730px;top:245px;width:903px;height:1px;background:#8a8d94;opacity:.75"></div>
<span class="ad" style="left:711.00px;top:258.00px;transform:scaleX(0.9919);">Add action</span>
<svg style="left:713px;top:326px;" width="15" height="12" viewBox="0 0 15 12"><path d="M2.2 0 H15 V12 H2.2 Q0 12 0 9.8 V2.2 Q0 0 2.2 0 Z" fill="#3a8ef8"/><path d="M2.2 0 H15 V6.2 H0 V2.2 Q0 0 2.2 0 Z" fill="#5b9be2"/><text x="7.7" y="9.6" text-anchor="middle" font-family="Liberation Serif" font-size="9.4" fill="#ffffff" letter-spacing="-0.2">Var</text></svg>
<span class="t" style="left:730.00px;top:322.00px;transform:scaleX(0.9817);">Change the variable</span>
<svg style="left:877.5px;top:326px;" width="13" height="12" viewBox="0 0 13 12"><rect x="1" y="1" width="9.8" height="5.8" fill="none" stroke="#4fb3bf" stroke-width="1.3"/><rect x="0.6" y="0.6" width="2.6" height="10.6" fill="#4fb3bf"/><circle cx="1.9" cy="2.4" r=".45" fill="#2a3140"/><circle cx="1.9" cy="4.4" r=".45" fill="#2a3140"/><circle cx="1.9" cy="6.4" r=".45" fill="#2a3140"/><path d="M8.2 1 V6.8" stroke="#4fb3bf" stroke-width="1"/><path d="M4.6 10 Q6.2 8 7.8 9.6 Q9.4 11.2 11.6 8.8" fill="none" stroke="#4fb3bf" stroke-width="1.2"/></svg>
<span class="va" style="left:894.00px;top:322.00px;transform:scaleX(0.9810);">MyBoolVar</span>
<span class="wh" style="left:970.10px;top:322.00px;">:</span>
<span class="op" style="left:980.40px;top:322.00px;transform:scaleX(1.0133);">set to true</span>
<svg style="left:713px;top:350px;" width="15" height="12" viewBox="0 0 15 12"><path d="M2.2 0 H15 V12 H2.2 Q0 12 0 9.8 V2.2 Q0 0 2.2 0 Z" fill="#3a8ef8"/><path d="M2.2 0 H15 V6.2 H0 V2.2 Q0 0 2.2 0 Z" fill="#5b9be2"/><text x="7.7" y="9.6" text-anchor="middle" font-family="Liberation Serif" font-size="9.4" fill="#ffffff" letter-spacing="-0.2">Var</text></svg>
<span class="t" style="left:730.00px;top:346.00px;transform:scaleX(0.9817);">Change the variable</span>
<svg style="left:877.5px;top:350px;" width="13" height="12" viewBox="0 0 13 12"><rect x="1" y="1" width="9.8" height="5.8" fill="none" stroke="#4fb3bf" stroke-width="1.3"/><rect x="0.6" y="0.6" width="2.6" height="10.6" fill="#4fb3bf"/><circle cx="1.9" cy="2.4" r=".45" fill="#2a3140"/><circle cx="1.9" cy="4.4" r=".45" fill="#2a3140"/><circle cx="1.9" cy="6.4" r=".45" fill="#2a3140"/><path d="M8.2 1 V6.8" stroke="#4fb3bf" stroke-width="1"/><path d="M4.6 10 Q6.2 8 7.8 9.6 Q9.4 11.2 11.6 8.8" fill="none" stroke="#4fb3bf" stroke-width="1.2"/></svg>
<span class="va" style="left:894.00px;top:346.00px;transform:scaleX(0.9574);">FailVariable</span>
<span class="wh" style="left:974.25px;top:346.00px;">:</span>
<span class="op" style="left:983.75px;top:346.00px;transform:scaleX(0.9772);">set to</span>
<span class="nu" style="left:1029.60px;top:346.00px;transform:scaleX(0.9143);">Ballz.ID</span>
<span class="ad" style="left:711.00px;top:369.00px;transform:scaleX(0.9919);">Add action</span>
<svg style="left:713px;top:424px;" width="15" height="12" viewBox="0 0 15 12"><path d="M2.2 0 H15 V12 H2.2 Q0 12 0 9.8 V2.2 Q0 0 2.2 0 Z" fill="#3a8ef8"/><path d="M2.2 0 H15 V6.2 H0 V2.2 Q0 0 2.2 0 Z" fill="#5b9be2"/><text x="7.7" y="9.6" text-anchor="middle" font-family="Liberation Serif" font-size="9.4" fill="#ffffff" letter-spacing="-0.2">Var</text></svg>
<span class="t" style="left:730.00px;top:420.00px;transform:scaleX(0.9817);">Change the variable</span>
<svg style="left:877.5px;top:424px;" width="13" height="12" viewBox="0 0 13 12"><rect x="1" y="1" width="9.8" height="5.8" fill="none" stroke="#4fb3bf" stroke-width="1.3"/><rect x="0.6" y="0.6" width="2.6" height="10.6" fill="#4fb3bf"/><circle cx="1.9" cy="2.4" r=".45" fill="#2a3140"/><circle cx="1.9" cy="4.4" r=".45" fill="#2a3140"/><circle cx="1.9" cy="6.4" r=".45" fill="#2a3140"/><path d="M8.2 1 V6.8" stroke="#4fb3bf" stroke-width="1"/><path d="M4.6 10 Q6.2 8 7.8 9.6 Q9.4 11.2 11.6 8.8" fill="none" stroke="#4fb3bf" stroke-width="1.2"/></svg>
<span class="va" style="left:894.00px;top:420.00px;transform:scaleX(0.9594);">PlayerTurn</span>
<span class="wh" style="left:969.00px;top:420.00px;">:</span>
<span class="op" style="left:979.00px;top:420.00px;transform:scaleX(1.0090);">set to true</span>
<svg style="left:713px;top:448px;" width="15" height="12" viewBox="0 0 15 12"><path d="M2.2 0 H15 V12 H2.2 Q0 12 0 9.8 V2.2 Q0 0 2.2 0 Z" fill="#3a8ef8"/><path d="M2.2 0 H15 V6.2 H0 V2.2 Q0 0 2.2 0 Z" fill="#5b9be2"/><text x="7.7" y="9.6" text-anchor="middle" font-family="Liberation Serif" font-size="9.4" fill="#ffffff" letter-spacing="-0.2">Var</text></svg>
<span class="t" style="left:730.00px;top:444.00px;transform:scaleX(0.9817);">Change the variable</span>
<svg style="left:877.5px;top:448px;" width="13" height="12" viewBox="0 0 13 12"><rect x="1" y="1" width="9.8" height="5.8" fill="none" stroke="#4fb3bf" stroke-width="1.3"/><rect x="0.6" y="0.6" width="2.6" height="10.6" fill="#4fb3bf"/><circle cx="1.9" cy="2.4" r=".45" fill="#2a3140"/><circle cx="1.9" cy="4.4" r=".45" fill="#2a3140"/><circle cx="1.9" cy="6.4" r=".45" fill="#2a3140"/><path d="M8.2 1 V6.8" stroke="#4fb3bf" stroke-width="1"/><path d="M4.6 10 Q6.2 8 7.8 9.6 Q9.4 11.2 11.6 8.8" fill="none" stroke="#4fb3bf" stroke-width="1.2"/></svg>
<span class="va" style="left:894.00px;top:444.00px;transform:scaleX(0.9574);">FailVariable</span>
<span class="wh" style="left:974.25px;top:444.00px;">:</span>
<span class="op" style="left:983.75px;top:444.00px;transform:scaleX(0.9456);">add</span>
<span class="nu" style="left:1017.50px;top:444.00px;transform:scaleX(0.9175);">100</span>
<span class="ad" style="left:711.00px;top:467.00px;transform:scaleX(0.9919);">Add action</span>
<svg style="left:713px;top:497px;" width="15" height="12" viewBox="0 0 15 12"><path d="M2.2 0 H15 V12 H2.2 Q0 12 0 9.8 V2.2 Q0 0 2.2 0 Z" fill="#3a8ef8"/><path d="M2.2 0 H15 V6.2 H0 V2.2 Q0 0 2.2 0 Z" fill="#5b9be2"/><text x="7.7" y="9.6" text-anchor="middle" font-family="Liberation Serif" font-size="9.4" fill="#ffffff" letter-spacing="-0.2">Var</text></svg>
<span class="t" style="left:730.00px;top:493.00px;transform:scaleX(0.9817);">Change the variable</span>
<svg style="left:877.5px;top:497px;" width="13" height="12" viewBox="0 0 13 12"><rect x="1" y="1" width="9.8" height="5.8" fill="none" stroke="#4fb3bf" stroke-width="1.3"/><rect x="0.6" y="0.6" width="2.6" height="10.6" fill="#4fb3bf"/><circle cx="1.9" cy="2.4" r=".45" fill="#2a3140"/><circle cx="1.9" cy="4.4" r=".45" fill="#2a3140"/><circle cx="1.9" cy="6.4" r=".45" fill="#2a3140"/><path d="M8.2 1 V6.8" stroke="#4fb3bf" stroke-width="1"/><path d="M4.6 10 Q6.2 8 7.8 9.6 Q9.4 11.2 11.6 8.8" fill="none" stroke="#4fb3bf" stroke-width="1.2"/></svg>
<span class="va" style="left:894.00px;top:493.00px;transform:scaleX(0.9594);">PlayerTurn</span>
<span class="wh" style="left:969.00px;top:493.00px;">:</span>
<span class="op" style="left:979.00px;top:493.00px;transform:scaleX(1.0090);">set to true</span>
<svg style="left:713px;top:521px;" width="15" height="12" viewBox="0 0 15 12"><path d="M2.2 0 H15 V12 H2.2 Q0 12 0 9.8 V2.2 Q0 0 2.2 0 Z" fill="#3a8ef8"/><path d="M2.2 0 H15 V6.2 H0 V2.2 Q0 0 2.2 0 Z" fill="#5b9be2"/><text x="7.7" y="9.6" text-anchor="middle" font-family="Liberation Serif" font-size="9.4" fill="#ffffff" letter-spacing="-0.2">Var</text></svg>
<span class="t" style="left:730.00px;top:517.00px;transform:scaleX(0.9817);">Change the variable</span>
<svg style="left:877.5px;top:521px;" width="13" height="12" viewBox="0 0 13 12"><rect x="1" y="1" width="9.8" height="5.8" fill="none" stroke="#4fb3bf" stroke-width="1.3"/><rect x="0.6" y="0.6" width="2.6" height="10.6" fill="#4fb3bf"/><circle cx="1.9" cy="2.4" r=".45" fill="#2a3140"/><circle cx="1.9" cy="4.4" r=".45" fill="#2a3140"/><circle cx="1.9" cy="6.4" r=".45" fill="#2a3140"/><path d="M8.2 1 V6.8" stroke="#4fb3bf" stroke-width="1"/><path d="M4.6 10 Q6.2 8 7.8 9.6 Q9.4 11.2 11.6 8.8" fill="none" stroke="#4fb3bf" stroke-width="1.2"/></svg>
<span class="va" style="left:894.00px;top:517.00px;transform:scaleX(0.9574);">FailVariable</span>
<span class="wh" style="left:974.25px;top:517.00px;">:</span>
<span class="op" style="left:983.75px;top:517.00px;transform:scaleX(0.9882);">subtract</span>
<span class="nu" style="left:1047.70px;top:517.00px;transform:scaleX(0.9362);">100</span>
<span class="ad" style="left:711.00px;top:540.00px;transform:scaleX(0.9919);">Add action</span>
<span class="ad" style="left:711.00px;top:586.00px;transform:scaleX(0.9919);">Add action</span>
<svg style="left:712.5px;top:614px;" width="16" height="14" viewBox="0 0 16 14"><rect x="4.6" y="0.4" width="7.4" height="6" fill="#4a9ae8" stroke="#2a6ab0" stroke-width=".5"/><rect x="5.2" y="0.8" width="6" height="1.6" fill="#a8d4ff"/><rect x="0.8" y="5.6" width="7.2" height="7.4" fill="#e01c1c" stroke="#7a0e0e" stroke-width=".5"/><rect x="8" y="6.4" width="7.4" height="7" fill="#22b022" stroke="#106a14" stroke-width=".5"/><rect x="2" y="7" width="1.2" height="3" fill="#ff8080" opacity=".7"/><rect x="9.4" y="7.8" width="1.2" height="3" fill="#90f090" opacity=".6"/></svg>
<span class="t" style="left:730.00px;top:612.00px;transform:scaleX(0.9845);">Create object</span>
<svg style="left:829px;top:614px;" width="16" height="16" viewBox="0 0 16 16"><defs><linearGradient id="g7" x1="0" y1="0" x2="1" y2="0"><stop offset="0" stop-color="#2a80c0"/><stop offset=".5" stop-color="#3db2e4"/><stop offset="1" stop-color="#45b6e6"/></linearGradient></defs><rect x="0" y="0" width="16" height="16" fill="#1f5f8c"/><rect x="0.8" y="0.8" width="14.4" height="14.4" fill="url(#g7)"/><rect x="1.2" y="1.4" width="13.6" height="2" fill="#9ad6f2"/><rect x="1.2" y="12.6" width="13.6" height="2" fill="#8cc6e2"/><text x="2.4" y="11.6" font-family="Liberation Sans" font-weight="bold" font-size="10" fill="#2c3a96">B</text><text x="9" y="11.6" font-family="Liberation Sans" font-weight="bold" font-style="italic" font-size="9" fill="#3a50aa">r</text></svg>
<span class="ob" style="left:848.00px;top:612.00px;transform:scaleX(0.9924);">BMText2</span>
<span class="t" style="left:919.00px;top:612.00px;transform:scaleX(1.0283);">at position</span>
<span class="nu" style="left:1000.80px;top:612.00px;transform:scaleX(0.9227);">Ballz.X()+4;Ballz.Y()</span>
<span class="t" style="left:1140.00px;top:612.00px;transform:scaleX(0.9291);">(layer:</span>
<span class="st" style="left:1187.50px;top:612.00px;transform:scaleX(0.9154);">Base layer</span>
<span class="t" style="left:1257.00px;top:612.00px;">)</span>
<svg style="left:711.5px;top:637.5px;" width="17" height="16" viewBox="0 0 17 16"><rect x="0.6" y="5.4" width="10.6" height="10" fill="#9c9c9c" stroke="#7a7a7a" stroke-width=".6"/><rect x="5.6" y="0.6" width="10.6" height="9.6" fill="#b8dcff" stroke="#1a5eb4" stroke-width="1.2"/><rect x="6.4" y="6.4" width="9" height="3" fill="#e8f4ff"/></svg>
<span class="t" style="left:730.00px;top:636.00px;transform:scaleX(1.0067);">Change the z-order of</span>
<svg style="left:891.5px;top:638px;" width="16" height="16" viewBox="0 0 16 16"><defs><linearGradient id="g8" x1="0" y1="0" x2="1" y2="0"><stop offset="0" stop-color="#2a80c0"/><stop offset=".5" stop-color="#3db2e4"/><stop offset="1" stop-color="#45b6e6"/></linearGradient></defs><rect x="0" y="0" width="16" height="16" fill="#1f5f8c"/><rect x="0.8" y="0.8" width="14.4" height="14.4" fill="url(#g8)"/><rect x="1.2" y="1.4" width="13.6" height="2" fill="#9ad6f2"/><rect x="1.2" y="12.6" width="13.6" height="2" fill="#8cc6e2"/><text x="2.4" y="11.6" font-family="Liberation Sans" font-weight="bold" font-size="10" fill="#2c3a96">B</text><text x="9" y="11.6" font-family="Liberation Sans" font-weight="bold" font-style="italic" font-size="9" fill="#3a50aa">r</text></svg>
<span class="ob" style="left:910.30px;top:636.00px;transform:scaleX(0.9924);">BMText2</span>
<span class="wh" style="left:975.80px;top:636.00px;">:</span>
<span class="op" style="left:986.30px;top:636.00px;transform:scaleX(0.9887);">set to</span>
<span class="nu" style="left:1033.00px;top:636.00px;">1</span>
<svg style="left:712.5px;top:664.5px;" width="14" height="14" viewBox="0 0 14 14"><path d="M2.5 11.6 V3.2 H10.6" fill="none" stroke="#e6e6e6" stroke-width="1.2"/><ellipse cx="11" cy="3" rx="2" ry="1.4" fill="#f4f4f4"/><path d="M0.6 10.4 L2.5 13.6 L4.4 10.4 Z" fill="#f4f4f4"/></svg>
<span class="t" style="left:730.00px;top:660.00px;transform:scaleX(0.9766);">Change the scale of</span>
<svg style="left:874px;top:662px;" width="16" height="16" viewBox="0 0 16 16"><defs><linearGradient id="g9" x1="0" y1="0" x2="1" y2="0"><stop offset="0" stop-color="#2a80c0"/><stop offset=".5" stop-color="#3db2e4"/><stop offset="1" stop-color="#45b6e6"/></linearGradient></defs><rect x="0" y="0" width="16" height="16" fill="#1f5f8c"/><rect x="0.8" y="0.8" width="14.4" height="14.4" fill="url(#g9)"/><rect x="1.2" y="1.4" width="13.6" height="2" fill="#9ad6f2"/><rect x="1.2" y="12.6" width="13.6" height="2" fill="#8cc6e2"/><text x="2.4" y="11.6" font-family="Liberation Sans" font-weight="bold" font-size="10" fill="#2c3a96">B</text><text x="9" y="11.6" font-family="Liberation Sans" font-weight="bold" font-style="italic" font-size="9" fill="#3a50aa">r</text></svg>
<span class="ob" style="left:893.00px;top:660.00px;transform:scaleX(0.9924);">BMText2</span>
<span class="wh" style="left:958.50px;top:660.00px;">:</span>
<span class="op" style="left:968.30px;top:660.00px;">set to</span>
<span class="nu" style="left:1014.70px;top:660.00px;transform:scaleX(0.9124);">0.5</span>
<svg style="left:712px;top:691px;" width="14" height="10" viewBox="0 0 14 10"><path d="M3.4 1 L2.4 7.6" stroke="#9a9ca3" stroke-width="1.3" stroke-linecap="round"/><path d="M0.8 7.8 L4.6 7.8" stroke="#9a9ca3" stroke-width=".9" opacity=".6"/><path d="M6.6 2.4 L7.4 6.6 L8.6 8.2" stroke="#9a9ca3" stroke-width="1.3" stroke-linecap="round" fill="none"/><path d="M11.8 1.2 Q10.6 2.4 10.6 4.6 L10.4 8.2" stroke="#9a9ca3" stroke-width="1.3" stroke-linecap="round" fill="none"/></svg>
<span class="t" style="left:730.00px;top:684.00px;">Change the text of</span>
<svg style="left:866px;top:686px;" width="16" height="16" viewBox="0 0 16 16"><defs><linearGradient id="g10" x1="0" y1="0" x2="1" y2="0"><stop offset="0" stop-color="#2a80c0"/><stop offset=".5" stop-color="#3db2e4"/><stop offset="1" stop-color="#45b6e6"/></linearGradient></defs><rect x="0" y="0" width="16" height="16" fill="#1f5f8c"/><rect x="0.8" y="0.8" width="14.4" height="14.4" fill="url(#g10)"/><rect x="1.2" y="1.4" width="13.6" height="2" fill="#9ad6f2"/><rect x="1.2" y="12.6" width="13.6" height="2" fill="#8cc6e2"/><text x="2.4" y="11.6" font-family="Liberation Sans" font-weight="bold" font-size="10" fill="#2c3a96">B</text><text x="9" y="11.6" font-family="Liberation Sans" font-weight="bold" font-style="italic" font-size="9" fill="#3a50aa">r</text></svg>
<span class="ob" style="left:885.00px;top:684.00px;transform:scaleX(0.9924);">BMText2</span>
<span class="wh" style="left:950.50px;top:684.00px;">:</span>
<span class="op" style="left:960.80px;top:684.00px;">set to</span>
<span class="st" style="left:1007.50px;top:684.00px;transform:scaleX(0.9690);">"ID "+Ballz.ID</span>
<span class="ad" style="left:711.00px;top:707.00px;transform:scaleX(0.9919);">Add action</span>
<svg style="left:713px;top:736px;" width="15" height="12" viewBox="0 0 15 12"><path d="M2.2 0 H15 V12 H2.2 Q0 12 0 9.8 V2.2 Q0 0 2.2 0 Z" fill="#3a8ef8"/><path d="M2.2 0 H15 V6.2 H0 V2.2 Q0 0 2.2 0 Z" fill="#5b9be2"/><text x="7.7" y="9.6" text-anchor="middle" font-family="Liberation Serif" font-size="9.4" fill="#ffffff" letter-spacing="-0.2">Var</text></svg>
<span class="t" style="left:730.00px;top:732.00px;transform:scaleX(0.9817);">Change the variable</span>
<svg style="left:877.5px;top:736px;" width="13" height="12" viewBox="0 0 13 12"><rect x="1" y="1" width="9.8" height="5.8" fill="none" stroke="#4fb3bf" stroke-width="1.3"/><rect x="0.6" y="0.6" width="2.6" height="10.6" fill="#4fb3bf"/><circle cx="1.9" cy="2.4" r=".45" fill="#2a3140"/><circle cx="1.9" cy="4.4" r=".45" fill="#2a3140"/><circle cx="1.9" cy="6.4" r=".45" fill="#2a3140"/><path d="M8.2 1 V6.8" stroke="#4fb3bf" stroke-width="1"/><path d="M4.6 10 Q6.2 8 7.8 9.6 Q9.4 11.2 11.6 8.8" fill="none" stroke="#4fb3bf" stroke-width="1.2"/></svg>
<span class="va" style="left:894.00px;top:732.00px;transform:scaleX(0.9568);">PlayerTurn</span>
<span class="wh" style="left:968.80px;top:732.00px;">:</span>
<span class="op" style="left:978.30px;top:732.00px;transform:scaleX(0.9874);">set to false</span>
<svg style="left:712px;top:758px;" width="15" height="15" viewBox="0 0 15 15"><rect x="0.75" y="0.75" width="13.5" height="13.5" fill="#1e2128" stroke="#f4f4f4" stroke-width="1.5"/><g fill="#6f6b60"><rect x="7" y="2.6" width="1" height="1"/><rect x="7" y="4.6" width="1" height="1"/><rect x="7" y="9.4" width="1" height="1"/><rect x="7" y="11.4" width="1" height="1"/><rect x="2.6" y="7" width="1" height="1"/><rect x="4.6" y="7" width="1" height="1"/><rect x="9.4" y="7" width="1" height="1"/><rect x="11.4" y="7" width="1" height="1"/></g><circle cx="7.5" cy="7.5" r="1.2" fill="none" stroke="#6f6b60" stroke-width=".6"/></svg>
<span class="t" style="left:730.00px;top:756.00px;transform:scaleX(1.0098);">Change the position of</span>
<svg style="left:899.5px;top:760px;" width="11" height="14" viewBox="0 0 11 14"><rect x="2" y="0.4" width="6.8" height="4" fill="#f0f0f0" stroke="#555" stroke-width=".5"/><rect x="3.8" y="2.2" width="3.2" height="1.6" fill="#f0a800"/><rect x="3.6" y="1.4" width="3.6" height=".8" fill="#3a4060"/><rect x="1.2" y="4.4" width="8.4" height="3.2" fill="#d98a2a"/><rect x="2.4" y="4.4" width="6" height="3.4" fill="#f3c2a2"/><rect x="3.2" y="4.8" width=".9" height="1.1" fill="#402040"/><rect x="6.6" y="4.8" width=".9" height="1.1" fill="#402040"/><rect x="0.3" y="7.6" width="10.2" height="4.8" fill="#e8000c" stroke="#7a0000" stroke-width=".6"/><rect x="3" y="8.2" width="4.8" height="3" fill="#ff1020"/><rect x="1" y="10" width="1.4" height="1.2" fill="#f0d0c0"/><rect x="8.4" y="10" width="1.4" height="1.2" fill="#f0d0c0"/><rect x="2.6" y="12.2" width="5.6" height="1.8" fill="#a8a488" stroke="#2a2a2a" stroke-width=".5"/></svg>
<span class="ob" style="left:915.30px;top:756.00px;transform:scaleX(0.9657);">Player</span>
<span class="wh" style="left:962.00px;top:756.00px;">:</span>
<span class="op" style="left:971.70px;top:756.00px;transform:scaleX(0.9785);">set to</span>
<span class="nu" style="left:1017.50px;top:756.00px;transform:scaleX(0.9015);">Ballz.X()</span>
<span class="t" style="left:1077.50px;top:756.00px;transform:scaleX(0.9071);">(x axis),</span>
<span class="op" style="left:1134.00px;top:756.00px;transform:scaleX(1.0041);">set to</span>
<span class="nu" style="left:1180.80px;top:756.00px;transform:scaleX(0.8833);">Ballz.Y()</span>
<span class="t" style="left:1240.00px;top:756.00px;transform:scaleX(0.9115);">(y axis)</span>
<span class="ad" style="left:711.00px;top:779.00px;transform:scaleX(0.9919);">Add action</span>
<svg style="left:713px;top:809px;" width="15" height="12" viewBox="0 0 15 12"><path d="M2.2 0 H15 V12 H2.2 Q0 12 0 9.8 V2.2 Q0 0 2.2 0 Z" fill="#3a8ef8"/><path d="M2.2 0 H15 V6.2 H0 V2.2 Q0 0 2.2 0 Z" fill="#5b9be2"/><text x="7.7" y="9.6" text-anchor="middle" font-family="Liberation Serif" font-size="9.4" fill="#ffffff" letter-spacing="-0.2">Var</text></svg>
<span class="t" style="left:730.00px;top:805.00px;transform:scaleX(0.9817);">Change the variable</span>
<svg style="left:877.5px;top:809px;" width="13" height="12" viewBox="0 0 13 12"><rect x="1" y="1" width="9.8" height="5.8" fill="none" stroke="#4fb3bf" stroke-width="1.3"/><rect x="0.6" y="0.6" width="2.6" height="10.6" fill="#4fb3bf"/><circle cx="1.9" cy="2.4" r=".45" fill="#2a3140"/><circle cx="1.9" cy="4.4" r=".45" fill="#2a3140"/><circle cx="1.9" cy="6.4" r=".45" fill="#2a3140"/><path d="M8.2 1 V6.8" stroke="#4fb3bf" stroke-width="1"/><path d="M4.6 10 Q6.2 8 7.8 9.6 Q9.4 11.2 11.6 8.8" fill="none" stroke="#4fb3bf" stroke-width="1.2"/></svg>
<span class="va" style="left:894.00px;top:805.00px;transform:scaleX(1.0083);">MyBoolVar</span>
<span class="wh" style="left:972.20px;top:805.00px;">:</span>
<span class="op" style="left:980.30px;top:805.00px;transform:scaleX(0.9822);">set to false</span>
<span class="ad" style="left:711.00px;top:829.00px;transform:scaleX(0.9919);">Add action</span>
<div style="left:0px;top:1050px;width:1920px;height:30px;background:#1c1c1c;"></div>
<svg style="left:10px;top:1057px;" width="17" height="17" viewBox="0 0 17 17"><path d="M0.5 2.6 L6.8 1.7 V7.8 H0.5 Z M7.8 1.5 L16 0.3 V7.8 H7.8 Z M0.5 8.8 H6.8 V14.9 L0.5 14 Z M7.8 8.8 H16 V16.3 L7.8 15.1 Z" fill="#ffffff"/></svg>
<svg style="left:44px;top:1054px;" width="22" height="22" viewBox="0 0 22 22"><defs><linearGradient id="wa" x1="0" y1="0" x2="1" y2="1"><stop offset="0" stop-color="#c8c8c8"/><stop offset=".5" stop-color="#707478"/><stop offset="1" stop-color="#2a2a2a"/></linearGradient></defs><path d="M11.2 2.8 L19.2 10.6 L10.6 19.2 L2.8 11.4 Z" fill="url(#wa)" stroke="#e0e0e0" stroke-width=".7" stroke-dasharray="1 .6"/><path d="M19.4 3.4 L11.8 7.2 L13.6 7.6 L5.6 9.6 L8.6 11.2 L2.8 19 L10.6 13.8 L9.4 13 L16.4 10.2 L13.6 9.2 Z" fill="#f7a83a"/></svg>
<span class="tb" style="left:67.50px;top:1055.00px;transform:scaleX(0.9829);">one Act 2 (Prime Tim...</span>
<div style="left:43px;top:1078px;width:152px;height:2px;background:#a9a9a9;"></div>
<svg style="left:207.5px;top:1056.5px;" width="17" height="17" viewBox="0 0 17 17"><circle cx="8.5" cy="8.5" r="7.6" fill="none" stroke="#ff1f4f" stroke-width="1.3" stroke-dasharray="1.6 .9"/><ellipse cx="8.5" cy="8.5" rx="3.6" ry="6" fill="none" stroke="#e0184a" stroke-width="1.1" stroke-dasharray="1.2 1"/></svg>
<span class="tb" style="left:229.00px;top:1055.00px;transform:scaleX(0.9655);">Teleport Player with O...</span>
<div style="left:204px;top:1078px;width:152px;height:2px;background:#a9a9a9;"></div>
<div style="left:361px;top:1050px;width:160px;height:30px;background:#3b3b3b;"></div>
<svg style="left:368.5px;top:1058px;" width="17" height="15" viewBox="0 0 17 15"><path d="M15.8 3.4 Q13.6 1.2 10.2 1.4 Q5.4 1.8 4.8 6.6 Q4.6 10.8 9.2 11.4 Q13.2 11.6 14.6 8.2 L14.8 6.6 H9.6 V8.4 H12.2 Q11.4 9.8 9.4 9.6 Q6.8 9.2 7 6.6 Q7.4 3.4 10.4 3.4 Q12.6 3.4 14 4.8 Z" fill="#ee2020"/><path d="M1 6.4 Q1.4 12.4 6.4 13.8 Q10.8 14.8 14.6 12.8 Q10.8 16.2 6 15.2 Q0.2 13.4 1 6.4 Z" fill="#ee2020"/></svg>
<span class="tb" style="left:389.00px;top:1055.00px;transform:scaleX(0.9577);">GDevelop 5 - E:\Progr...</span>
<div style="left:361px;top:1078px;width:160px;height:2px;background:#c8c8c8;"></div>
<svg style="left:1704px;top:1057px;" width="17" height="17" viewBox="0 0 17 17"><defs><linearGradient id="rd" x1="0" y1="0" x2="1" y2="1"><stop offset="0" stop-color="#d84a4a"/><stop offset="1" stop-color="#5a0000"/></linearGradient></defs><rect x="0.5" y="0.5" width="16" height="16" rx="2.4" fill="url(#rd)"/><rect x="6" y="3.4" width="5" height="10" rx="1" fill="none" stroke="#ffffff" stroke-width="1.3"/></svg>
<svg style="left:1747px;top:1058px;" width="17" height="15" viewBox="0 0 17 15"><path d="M15.8 3.4 Q13.6 1.2 10.2 1.4 Q5.4 1.8 4.8 6.6 Q4.6 10.8 9.2 11.4 Q13.2 11.6 14.6 8.2 L14.8 6.6 H9.6 V8.4 H12.2 Q11.4 9.8 9.4 9.6 Q6.8 9.2 7 6.6 Q7.4 3.4 10.4 3.4 Q12.6 3.4 14 4.8 Z" fill="#ee2020"/><path d="M1 6.4 Q1.4 12.4 6.4 13.8 Q10.8 14.8 14.6 12.8 Q10.8 16.2 6 15.2 Q0.2 13.4 1 6.4 Z" fill="#ee2020"/></svg>
<svg style="left:1809px;top:1060px;" width="14" height="9" viewBox="0 0 14 9"><path d="M1 7.6 L7 1.6 L13 7.6" fill="none" stroke="#e8e8e8" stroke-width="1.2"/></svg>
<svg style="left:1832px;top:1058px;" width="17" height="14" viewBox="0 0 17 14"><path d="M3 2.4 Q4.6 1 6.6 2.4 H10.4 Q12.4 1 14 2.4 Q16.4 5 16.2 11.4 Q15.6 13.4 13.4 12.4 L11.2 10.2 H5.8 L3.6 12.4 Q1.4 13.4 0.8 11.4 Q0.6 5 3 2.4 Z" fill="#c9c9c9"/><circle cx="5.2" cy="5.6" r="1.4" fill="#3a3a3a"/><circle cx="11.8" cy="5.6" r="1.4" fill="#3a3a3a"/><path d="M6.2 8.2 Q8.5 9.6 10.8 8.2" stroke="#3a3a3a" stroke-width=".9" fill="none"/></svg>
<svg style="left:1856px;top:1057px;" width="17" height="17" viewBox="0 0 17 17"><rect x="0.5" y="0.5" width="16" height="16" rx="1.6" fill="#12b43a"/><path d="M3 6.2 H5.6 L9 3.2 V13.8 L5.6 10.8 H3 Z" fill="#ffffff"/><path d="M11 4.6 Q13.4 8.5 11 12.4" stroke="#ffffff" stroke-width="1.4" fill="none"/></svg>
<span class="tb" style="left:1882.00px;top:1055.00px;transform:scaleX(0.9265);">11:15</span>
<div style="left:1914px;top:1050px;width:1px;height:30px;background:#6a6a6a;"></div></div></body></html>
